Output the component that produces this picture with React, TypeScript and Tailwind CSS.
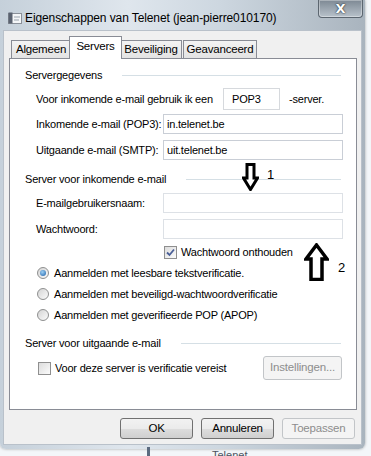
import React from "react";

const font = { fontFamily: "'Liberation Sans', Arial, sans-serif" };

function GroupHeader({ label, className = "" }: { label: string; className?: string }) {
  return (
    <div className={`flex h-[16px] items-center pl-[15px] pr-[15px] ${className}`}>
      <span className="whitespace-nowrap text-[11px] leading-none tracking-[-0.2px] text-black">{label}</span>
      <div className="ml-[20px] h-px flex-1 bg-[#d5dfe5]" />
    </div>
  );
}

function TextBox({ value = "", empty = false, className = "" }: { value?: string; empty?: boolean; className?: string }) {
  return (
    <div
      className={`flex h-[20px] items-center border px-[3px] whitespace-nowrap ${
        empty ? "border-[#dde1e6]" : "border-[#c9ced6]"
      } bg-white ${className}`}
    >
      {value}
    </div>
  );
}

function Check({ checked }: { checked?: boolean }) {
  return (
    <div className="flex h-[13px] w-[13px] shrink-0 items-center justify-center border border-[#8f8f8f] bg-[linear-gradient(135deg,#dcdcdc,#fbfbfb)]">
      {checked && (
        <svg width="9" height="9" viewBox="0 0 9 9">
          <path d="M1 4.5 L3.5 7 L8 1.5" fill="none" stroke="#4a5f97" strokeWidth="1.8" />
        </svg>
      )}
    </div>
  );
}

function Radio({ checked }: { checked?: boolean }) {
  return (
    <div className="flex h-[12px] w-[12px] shrink-0 items-center justify-center rounded-full border border-[#8e8f8f] bg-[linear-gradient(135deg,#d4d4d4,#fbfbfb)]">
      {checked && <div className="h-[6px] w-[6px] rounded-full bg-[radial-gradient(circle_at_40%_35%,#9cd0f5,#1c5fa8)]" />}
    </div>
  );
}

function Button({ label, disabled, className = "" }: { label: string; disabled?: boolean; className?: string }) {
  return (
    <div
      className={`flex items-center justify-center whitespace-nowrap rounded-[3px] border text-[11.5px] tracking-[-0.2px] ${
        disabled
          ? "border-[#c2c5c8] bg-[#f4f4f4] text-[#8d8d8d]"
          : "border-[#707070] bg-[linear-gradient(#f2f2f2_0%,#ebebeb_50%,#dddddd_51%,#cfcfcf_100%)] text-black"
      } ${className}`}
    >
      {label}
    </div>
  );
}

function Tab({ label, active, className = "" }: { label: string; active?: boolean; className?: string }) {
  return (
    <div
      className={`flex items-center justify-center whitespace-nowrap border border-b-0 border-[#898c95] text-[11.5px] tracking-[-0.2px] text-black ${
        active
          ? "relative z-10 -mx-[2px] mb-[-1px] h-[23px] bg-white pb-[3px]"
          : "h-[18px] bg-[linear-gradient(#f3f3f3,#e3e3e3)]"
      } ${className}`}
    >
      {label}
    </div>
  );
}

function ArrowDown() {
  return (
    <svg width="17" height="28" viewBox="0 0 17 28">
      <path d="M5 1.5 H12 V15 H15.5 L8.5 26.5 L1.5 15 H5 Z" fill="white" stroke="black" strokeWidth="3" strokeLinejoin="miter" />
    </svg>
  );
}

function ArrowUp() {
  return (
    <svg width="25" height="38" viewBox="0 0 25 38">
      <path d="M12.5 2 L23 16 H18 V36.5 H7 V16 H2 Z" fill="white" stroke="black" strokeWidth="3.5" strokeLinejoin="miter" />
    </svg>
  );
}

const row = "flex items-center whitespace-nowrap text-[11px] tracking-[-0.2px] text-black";

export default function App() {
  return (
    <div className="relative h-[456px] w-[371px] overflow-hidden bg-[#f3f6f9]" style={font}>
      <div className="flex h-[449px] w-[365px] flex-col rounded-b-[6px] bg-[linear-gradient(90deg,#c5d0da_0%,#dfe6ed_35%,#cdd7e0_60%,#a9b4be_100%)] shadow-[0_0_3px_rgba(0,0,0,0.35)]">
        {/* title bar */}
        <div className="relative flex h-[30px] shrink-0 items-center pl-[8px]">
          <svg width="14" height="12" viewBox="0 0 14 12" className="mt-[6px]">
            <rect x="0.5" y="1.5" width="13" height="10" fill="#f4f6f8" stroke="#8a9099" />
            <rect x="0.5" y="0.5" width="4" height="11" fill="#5a6270" />
            <path d="M6 5 H12 M6 8 H11" stroke="#9aa3ad" strokeWidth="1" />
          </svg>
          <span className="ml-[3px] mt-[6px] whitespace-nowrap text-[12px] leading-none tracking-[-0.1px] text-black">
            Eigenschappen van Telenet (jean-pierre010170)
          </span>
          <div className="absolute right-[2px] top-0 flex h-[18px] w-[45px] items-center justify-center rounded-b-[4px] border border-t-0 border-[#5c6670] bg-[linear-gradient(#7d8893,#b8c2cb)] shadow-[inset_0_0_0_1px_rgba(255,255,255,0.35)]">
            <span
              className="text-[13px] font-bold leading-none text-white"
              style={{ fontFamily: "'DejaVu Sans', sans-serif", textShadow: "0 0 2px #2a3038, 0 0 1px #2a3038" }}
            >
              X
            </span>
          </div>
        </div>

        {/* client area */}
        <div className="mx-[3px] mb-[4px] flex flex-1 flex-col border border-[#b9c1ca] bg-[#f0f0f0] px-[5px] pt-[5px]">
          <div className="flex items-end pl-[2px]">
            <Tab label="Algemeen" className="w-[60px]" />
            <Tab label="Servers" active className="w-[53px]" />
            <Tab label="Beveiliging" className="w-[62px]" />
            <Tab label="Geavanceerd" className="ml-[1px] w-[74px]" />
          </div>

          {/* tab page */}
          <div className="flex h-[352px] w-[348px] flex-col border border-[#898c95] bg-white pt-[8px]">
            <GroupHeader label="Servergegevens" />
            <div className={`ml-[26px] mt-[5px] h-[22px] ${row}`}>
              <span className="w-[187px]">Voor inkomende e-mail gebruik ik een</span>
              <div className="flex h-[22px] w-[57px] items-center border border-[#d6d9dd] bg-white pl-[8px]">POP3</div>
              <span className="ml-[9px]">-server.</span>
            </div>
            <div className={`ml-[26px] mt-[4px] ${row}`}>
              <span className="w-[127px]">Inkomende e-mail (POP3):</span>
              <TextBox value="in.telenet.be" className="w-[180px]" />
            </div>
            <div className={`ml-[26px] mt-[6px] ${row}`}>
              <span className="w-[127px]">Uitgaande e-mail (SMTP):</span>
              <TextBox value="uit.telenet.be" className="w-[180px]" />
            </div>

            <GroupHeader label="Server voor inkomende e-mail" className="mt-[11px]" />
            <div className={`ml-[26px] mt-[6px] ${row}`}>
              <span className="w-[127px]">E-mailgebruikersnaam:</span>
              <TextBox empty className="w-[180px]" />
            </div>
            <div className={`ml-[26px] mt-[6px] ${row}`}>
              <span className="w-[127px]">Wachtwoord:</span>
              <TextBox empty className="w-[180px]" />
            </div>
            <div className={`ml-[154px] mt-[5px] h-[16px] gap-[4px] ${row}`}>
              <Check checked />
              <span>Wachtwoord onthouden</span>
            </div>
            <div className="ml-[27px] mt-[5px] flex flex-col gap-[5px]">
              <div className={`h-[16px] gap-[5px] ${row}`}>
                <Radio checked />
                <span>Aanmelden met leesbare tekstverificatie.</span>
              </div>
              <div className={`h-[16px] gap-[5px] ${row}`}>
                <Radio />
                <span>Aanmelden met beveiligd-wachtwoordverificatie</span>
              </div>
              <div className={`h-[16px] gap-[5px] ${row}`}>
                <Radio />
                <span>Aanmelden met geverifieerde POP (APOP)</span>
              </div>
            </div>

            <GroupHeader label="Server voor uitgaande e-mail" className="mt-[12px]" />
            <div className={`ml-[28px] mr-[14px] mt-[5px] h-[24px] ${row}`}>
              <Check />
              <span className="ml-[4px] flex-1">Voor deze server is verificatie vereist</span>
              <Button label="Instellingen..." disabled className="h-[24px] w-[79px]" />
            </div>
          </div>

          {/* dialog buttons */}
          <div className="mt-[8px] flex justify-end gap-[8px] pr-[1px]">
            <Button label="OK" className="h-[21px] w-[73px]" />
            <Button label="Annuleren" className="h-[21px] w-[73px]" />
            <Button label="Toepassen" disabled className="h-[21px] w-[73px]" />
          </div>
        </div>
      </div>

      {/* desktop bit below the window */}
      <div className="absolute left-[147px] top-[447px] h-[9px] w-[3px] bg-[#5b6b80]" />
      <span className="absolute left-[212px] top-[450px] text-[11px] leading-none text-[#4b5360]">Telenet</span>

      {/* hand-drawn annotations */}
      <div className="absolute left-[242px] top-[163px]">
        <ArrowDown />
      </div>
      <span className="absolute left-[267px] top-[168px] text-[13px] leading-none text-black">1</span>
      <div className="absolute left-[304px] top-[243px]">
        <ArrowUp />
      </div>
      <span className="absolute left-[338px] top-[261px] text-[13px] leading-none text-black">2</span>
    </div>
  );
}
